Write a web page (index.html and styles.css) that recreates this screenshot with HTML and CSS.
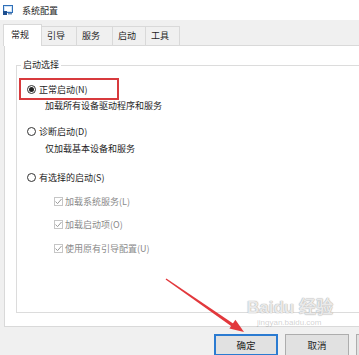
FILE: index.html
```html
<!DOCTYPE html>
<html lang="zh-CN">
<head>
    <meta charset="UTF-8">
    <title>系统配置</title>
    <link rel="stylesheet" href="styles.css">
</head>
<body>

    <div class="window">
        <div class="titlebar">
            <svg class="app-icon" width="10" height="10" viewBox="0 0 10 10">
                <rect x="0.5" y="0.5" width="9" height="7" fill="#cfe3f7" stroke="#2f6fb8"/>
                <rect x="2" y="2" width="6" height="4" fill="#ffffff"/>
                <rect x="0" y="6" width="4" height="4" fill="#1e4f8f"/>
                <rect x="5" y="8" width="4" height="1.5" fill="#6d8db5"/>
            </svg>
            <span>系统配置</span>
        </div>

        <div class="tabs">
            <div class="tab active">常规</div>
            <div class="tab t2">引导</div>
            <div class="tab t3">服务</div>
            <div class="tab t4">启动</div>
            <div class="tab t5">工具</div>
        </div>

        <div class="panel">
            <fieldset class="group">
                <legend>启动选择</legend>

                <div class="option highlight"><span class="radio checked"></span>正常启动(N)</div>
                <div class="desc d1">加载所有设备驱动程序和服务</div>

                <div class="option o2"><span class="radio"></span>诊断启动(D)</div>
                <div class="desc d2">仅加载基本设备和服务</div>

                <div class="option o3"><span class="radio"></span>有选择的启动(S)</div>

                <div class="check c1"><span class="box"><svg width="7" height="7" viewBox="0 0 7 7"><path d="M0.5 3.6 L2.6 5.6 L6.5 1" fill="none" stroke="#9a9a9a" stroke-width="1"/></svg></span>加载系统服务(L)</div>
                <div class="check c2"><span class="box"><svg width="7" height="7" viewBox="0 0 7 7"><path d="M0.5 3.6 L2.6 5.6 L6.5 1" fill="none" stroke="#9a9a9a" stroke-width="1"/></svg></span>加载启动项(O)</div>
                <div class="check c3"><span class="box"><svg width="7" height="7" viewBox="0 0 7 7"><path d="M0.5 3.6 L2.6 5.6 L6.5 1" fill="none" stroke="#9a9a9a" stroke-width="1"/></svg></span>使用原有引导配置(U)</div>
            </fieldset>
        </div>

        <div class="actions">
            <button class="btn default">确定</button>
            <button class="btn">取消</button>
            <button class="btn edge"></button>
        </div>
    </div>

    <!-- annotation arrow drawn over the dialog -->
    <svg class="arrow" width="359" height="355" viewBox="0 0 359 355">
        <polygon points="165.6,279.6 166.4,278.4 234.6,324.6 232.8,327.2" fill="#e2383c"/>
        <polygon points="244,332 229.4,328.4 235.4,319.8" fill="#e2383c"/>
    </svg>

    <div class="watermark">
        <div class="wm-logo">Bai<span class="paw">du</span> 经验</div>
        <div class="wm-url">jingyan.baidu.com</div>
    </div>

</body>
</html>
```

FILE: styles.css
```css
body {
    margin: 0;
    width: 359px;
    height: 355px;
    overflow: hidden;
    position: relative;
    background-color: #f0f0f0;
    font-family: "Noto Sans CJK SC", "Noto Sans", sans-serif;
    font-size: 9px;
    color: #1e1e1e;
}

.titlebar {
    height: 20px;
    background-color: #fff;
    display: flex;
    align-items: center;
    padding-left: 3px;
    gap: 9px;
}

.app-icon {
    display: block;
}

.tabs {
    height: 25px;
    display: flex;
    align-items: flex-end;
    padding-left: 3px;
    box-sizing: border-box;
}

.tab {
    height: 19px;
    box-sizing: border-box;
    border: 1px solid #d9d9d9;
    border-bottom: none;
    margin-left: -1px;
    padding-left: 5px;
    line-height: 18px;
    background-color: #f0f0f0;
}

.tab.active {
    margin-left: 0;
    width: 39px;
    height: 22px;
    line-height: 20px;
    padding-left: 7px;
    background-color: #fff;
    margin-bottom: -1px;
    position: relative;
    z-index: 1;
}

.t2 { width: 36px; }
.t3 { width: 37px; }
.t4 { width: 34px; }
.t5 { width: 35px; }

.panel {
    margin-left: 4px;
    height: 282px;
    box-sizing: border-box;
    border: 1px solid #d9d9d9;
    border-right: none;
    background-color: #fff;
    padding: 13px 0 0 11px;
}

.group {
    margin: 0;
    height: 254px;
    box-sizing: border-box;
    border: 1px solid #dcdcdc;
    border-right: none;
    padding: 0 0 0 1px;
}

.group legend {
    margin-left: 3px;
    padding: 0 2px;
    line-height: 12px;
}

.option {
    display: flex;
    align-items: center;
    gap: 3px;
    height: 12px;
    padding-left: 9px;
}

.highlight {
    margin: 7px 0 0 1px;
    width: 100px;
    height: 22px;
    box-sizing: border-box;
    border: 2px solid #d83a3d;
    padding-left: 6px;
}

.radio {
    width: 9px;
    height: 9px;
    box-sizing: border-box;
    border: 1px solid #333;
    border-radius: 50%;
    display: flex;
    align-items: center;
    justify-content: center;
    background-color: #fff;
}

.radio.checked::after {
    content: "";
    width: 5px;
    height: 5px;
    border-radius: 50%;
    background-color: #222;
}

.desc {
    padding-left: 27px;
    line-height: 12px;
}

.o2 { margin-top: 13px; }
.d2 { margin-top: 6px; }
.o3 { margin-top: 16px; }

.check {
    display: flex;
    align-items: center;
    gap: 2px;
    height: 12px;
    padding-left: 36px;
    color: #8a8a8a;
}

.box {
    width: 9px;
    height: 9px;
    box-sizing: border-box;
    border: 1px solid #c6c6c6;
    display: flex;
    align-items: center;
    justify-content: center;
}

.box svg {
    display: block;
}

.c1 { margin-top: 12px; }
.c2 { margin-top: 11px; }
.c3 { margin-top: 12px; }

.actions {
    display: flex;
    gap: 7px;
    padding: 7px 0 0 214px;
    overflow: hidden;
}

.btn {
    width: 64px;
    height: 22px;
    flex-shrink: 0;
    font-family: inherit;
    font-size: 9.5px;
    color: #1e1e1e;
    background-color: #e1e1e1;
    border: 1px solid #adadad;
    padding: 0;
}

.btn.default {
    border: 2px solid #2b7bd1;
}

.btn.edge {
    width: 10px;
    border-right: none;
}

.arrow {
    position: absolute;
    top: 0;
    left: 0;
    pointer-events: none;
}

.watermark {
    position: absolute;
    left: 247px;
    top: 298px;
    pointer-events: none;
}

.wm-logo {
    font-family: "Liberation Sans", sans-serif;
    font-size: 17px;
    font-weight: bold;
    line-height: 20px;
    color: rgba(255, 255, 255, 0.75);
    text-shadow: 0 0 1px #aaa, 0 0 1px #aaa;
}

.wm-url {
    margin-left: 10px;
    font-family: "Liberation Sans", sans-serif;
    font-size: 8px;
    line-height: 9px;
    color: rgba(140, 140, 140, 0.4);
}
```
